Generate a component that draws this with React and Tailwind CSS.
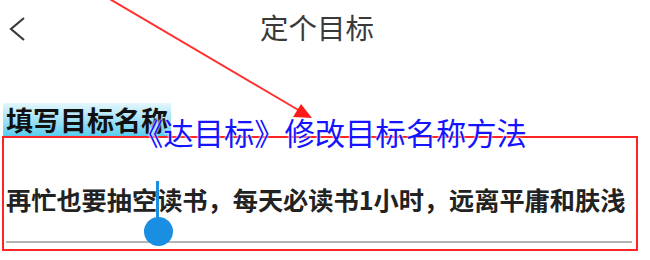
import React from 'react';

const cjk = { fontFamily: '"Noto Sans CJK SC", "Noto Sans", sans-serif' };

const App = () => {
    return (
        <div className="relative w-[650px] h-[260px] bg-white overflow-hidden" style={cjk}>
            {/* header */}
            <div className="flex items-center h-[54px]">
                <svg className="ml-[7px] mt-[4px]" width="20" height="28" viewBox="0 0 20 28">
                    <path d="M17 3 L4 14 L17 25" fill="none" stroke="#3a3a3a" strokeWidth="2.2" />
                </svg>
                <h1 className="ml-[233px] text-[28.5px] leading-none text-[#3a3a3a]">定个目标</h1>
            </div>

            {/* label */}
            <div className="mt-[49px] ml-[3px] inline-block h-[33px] px-[3px] bg-gradient-to-b from-[#e4f7fd] to-[#55cdee]">
                <span className="text-[27px] leading-[33px] font-bold text-[#111]">填写目标名称</span>
            </div>

            {/* input box */}
            <div className="ml-[2px] w-[636px] h-[115px] border-2 border-[#ff2424] flex flex-col">
                <div className="mt-[46px] pl-[2px] text-[25.2px] leading-[30px] font-bold text-[#222] whitespace-nowrap">
                    再忙也要抽空读书，每天必读书1小时，远离平庸和肤浅
                </div>
                <div className="mt-auto mb-[6px] ml-[2px] w-[626px] h-[2px] bg-[#b4b4b4]" />
            </div>

            {/* cursor handle */}
            <div className="absolute left-[156px] top-[181px] w-[3px] h-[40px] bg-[#1a8ee0]" />
            <div className="absolute left-[144px] top-[217px] w-[29px] h-[29px] rounded-full bg-[#1a8ee0]" />

            {/* annotation arrow */}
            <svg className="absolute left-0 top-0" width="650" height="260" viewBox="0 0 650 260">
                <line x1="108" y1="-2" x2="300" y2="111" stroke="#ff3030" strokeWidth="2" />
                <polygon points="312,118 293,117 301,104" fill="#ff1a1a" />
            </svg>

            {/* overlay title */}
            <div
                className="absolute left-[133px] top-[112px] text-[30.3px] leading-[40px] text-[#1414ff] whitespace-nowrap"
                style={{ textShadow: '0 0 2px #fff, 0 0 2px #fff' }}
            >
                《达目标》修改目标名称方法
            </div>
        </div>
    );
};

export default App;
